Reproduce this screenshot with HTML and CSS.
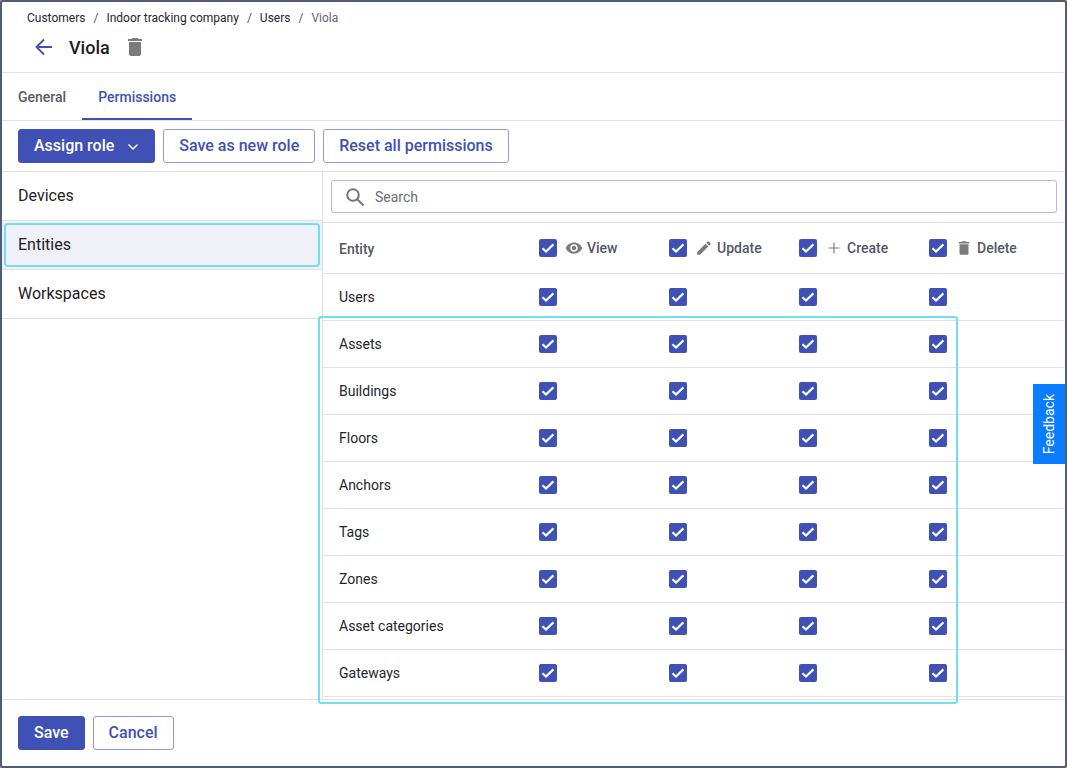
FILE: index.html
```html
<!DOCTYPE html>
<html lang="en">
<head>
  <meta charset="UTF-8" />
  <meta name="viewport" content="width=device-width, initial-scale=1" />
  <title>Viola - Permissions</title>
  <link rel="stylesheet" href="styles.css">
</head>
<body>
  <svg class="defs" width="0" height="0">
    <symbol id="check" viewBox="0 0 18 18">
      <rect width="18" height="18" rx="2" fill="#3f51b5" />
      <path d="M3.500 9.300L7 12.600l7.400-7.200" fill="none" stroke="#fff" stroke-width="2.200" />
    </symbol>
    <symbol id="trash" viewBox="0 0 24 24">
      <path d="M6 19c0 1.100.9 2 2 2h8c1.100 0 2-.9 2-2V7H6v12zM19 4h-3.500l-1-1h-5l-1 1H5v2h14V4z" fill="currentColor" />
    </symbol>
  </svg>

  <div class="frame">
    <header class="page-head">
      <div class="crumbs">
        <span>Customers</span><i>/</i><span>Indoor tracking company</span><i>/</i><span>Users</span><i>/</i><span class="crumb-last">Viola</span>
      </div>
      <div class="title-row">
        <svg class="back" width="24" height="24" viewBox="0 0 24 24"><path d="M21 12H5.500M13 4.500L5.500 12l7.500 7.500" fill="none" stroke="currentColor" stroke-width="1.800" /></svg>
        <h1>Viola</h1>
        <svg class="title-trash" width="24" height="24"><use href="#trash" /></svg>
      </div>
    </header>

    <nav class="tabs">
      <a class="tab">General</a>
      <a class="tab active">Permissions</a>
    </nav>

    <div class="toolbar">
      <button class="btn primary assign">Assign role
        <svg width="12" height="8" viewBox="0 0 12 8"><path d="M1.500 1.500L6 6l4.500-4.500" fill="none" stroke="#fff" stroke-width="1.500" /></svg>
      </button>
      <button class="btn outline">Save as new role</button>
      <button class="btn outline">Reset all permissions</button>
    </div>

    <div class="content">
      <aside class="side">
        <div class="side-item">Devices</div>
        <div class="side-item selected">Entities</div>
        <div class="side-item">Workspaces</div>
      </aside>

      <section class="perms">
        <div class="search-row">
          <label class="search">
            <svg width="24" height="24" viewBox="0 0 24 24"><circle cx="10" cy="10" r="5.800" fill="none" stroke="#757575" stroke-width="2" /><path d="M14.500 14.500L20.500 20.500" stroke="#757575" stroke-width="2" /></svg>
            <span>Search</span>
          </label>
        </div>

        <div class="row head">
          <div class="name">Entity</div>
          <div class="cell"><svg class="cb"><use href="#check" /></svg>
            <svg class="ic" width="18" height="18" viewBox="0 0 24 24"><path d="M12 4.500C7 4.500 2.700 7.600 1 12c1.700 4.400 6 7.500 11 7.500s9.300-3.100 11-7.500c-1.700-4.400-6-7.500-11-7.500zM12 17c-2.800 0-5-2.200-5-5s2.200-5 5-5 5 2.200 5 5-2.200 5-5 5zm0-8c-1.700 0-3 1.300-3 3s1.300 3 3 3 3-1.300 3-3-1.300-3-3-3z" fill="currentColor" /></svg>
            View</div>
          <div class="cell"><svg class="cb"><use href="#check" /></svg>
            <svg class="ic" width="18" height="18" viewBox="0 0 24 24"><path d="M3 17.250V21h3.750L17.800 9.940l-3.750-3.750L3 17.250zM20.700 7.040a1 1 0 0 0 0-1.410l-2.340-2.340a1 1 0 0 0-1.410 0l-1.830 1.830 3.750 3.750 1.830-1.830z" fill="currentColor" /></svg>
            Update</div>
          <div class="cell"><svg class="cb"><use href="#check" /></svg>
            <svg class="ic" width="18" height="18" viewBox="0 0 24 24"><path d="M12 5v14M5 12h14" stroke="currentColor" stroke-width="1.600" fill="none" /></svg>
            Create</div>
          <div class="cell"><svg class="cb"><use href="#check" /></svg>
            <svg class="ic" width="18" height="18"><use href="#trash" /></svg>
            Delete</div>
        </div>

        <div class="row"><div class="name">Users</div><div class="cell"><svg class="cb"><use href="#check" /></svg></div><div class="cell"><svg class="cb"><use href="#check" /></svg></div><div class="cell"><svg class="cb"><use href="#check" /></svg></div><div class="cell"><svg class="cb"><use href="#check" /></svg></div></div>
        <div class="row"><div class="name">Assets</div><div class="cell"><svg class="cb"><use href="#check" /></svg></div><div class="cell"><svg class="cb"><use href="#check" /></svg></div><div class="cell"><svg class="cb"><use href="#check" /></svg></div><div class="cell"><svg class="cb"><use href="#check" /></svg></div></div>
        <div class="row"><div class="name">Buildings</div><div class="cell"><svg class="cb"><use href="#check" /></svg></div><div class="cell"><svg class="cb"><use href="#check" /></svg></div><div class="cell"><svg class="cb"><use href="#check" /></svg></div><div class="cell"><svg class="cb"><use href="#check" /></svg></div></div>
        <div class="row"><div class="name">Floors</div><div class="cell"><svg class="cb"><use href="#check" /></svg></div><div class="cell"><svg class="cb"><use href="#check" /></svg></div><div class="cell"><svg class="cb"><use href="#check" /></svg></div><div class="cell"><svg class="cb"><use href="#check" /></svg></div></div>
        <div class="row"><div class="name">Anchors</div><div class="cell"><svg class="cb"><use href="#check" /></svg></div><div class="cell"><svg class="cb"><use href="#check" /></svg></div><div class="cell"><svg class="cb"><use href="#check" /></svg></div><div class="cell"><svg class="cb"><use href="#check" /></svg></div></div>
        <div class="row"><div class="name">Tags</div><div class="cell"><svg class="cb"><use href="#check" /></svg></div><div class="cell"><svg class="cb"><use href="#check" /></svg></div><div class="cell"><svg class="cb"><use href="#check" /></svg></div><div class="cell"><svg class="cb"><use href="#check" /></svg></div></div>
        <div class="row"><div class="name">Zones</div><div class="cell"><svg class="cb"><use href="#check" /></svg></div><div class="cell"><svg class="cb"><use href="#check" /></svg></div><div class="cell"><svg class="cb"><use href="#check" /></svg></div><div class="cell"><svg class="cb"><use href="#check" /></svg></div></div>
        <div class="row"><div class="name">Asset categories</div><div class="cell"><svg class="cb"><use href="#check" /></svg></div><div class="cell"><svg class="cb"><use href="#check" /></svg></div><div class="cell"><svg class="cb"><use href="#check" /></svg></div><div class="cell"><svg class="cb"><use href="#check" /></svg></div></div>
        <div class="row"><div class="name">Gateways</div><div class="cell"><svg class="cb"><use href="#check" /></svg></div><div class="cell"><svg class="cb"><use href="#check" /></svg></div><div class="cell"><svg class="cb"><use href="#check" /></svg></div><div class="cell"><svg class="cb"><use href="#check" /></svg></div></div>

        <div class="rows-mark"></div>
      </section>
    </div>

    <footer class="foot">
      <button class="btn primary">Save</button>
      <button class="btn outline">Cancel</button>
    </footer>

    <div class="feedback"><span>Feedback</span></div>
  </div>
</body>
</html>
```

FILE: styles.css
```css
*, *::before, *::after {
  box-sizing: border-box;
}

html {
  background: #e9a23b;
}

body {
  margin: 0;
  font-family: Roboto, sans-serif;
  color: #1f2026;
}

.defs {
  position: absolute;
}

.frame {
  position: relative;
  width: 1067px;
  height: 768px;
  border: 2px solid #4f5d78;
  border-radius: 3px;
  display: flex;
  flex-direction: column;
  overflow: hidden;
  background: #fff;
}

/* head */
.page-head {
  height: 71px;
  padding: 9px 0 0 25px;
  border-bottom: 1px solid #e2e2e4;
}

.crumbs {
  display: flex;
  font-size: 12px;
  line-height: 14px;
  color: #24252b;
}

.crumbs i {
  font-style: normal;
  margin: 0 8px;
  color: #55565f;
}

.crumb-last {
  color: #62636c;
}

.title-row {
  display: flex;
  align-items: center;
  margin-top: 8px;
  height: 28px;
  padding-left: 4px;
}

.back {
  color: #3f51b5;
}

.title-row h1 {
  margin: 0 0 0 14px;
  font-size: 18px;
  font-weight: 500;
  color: #1b1c22;
}

.title-trash {
  margin-left: 13px;
  color: #7b7b7f;
}

/* tabs */
.tabs {
  display: flex;
  height: 48px;
  padding-left: 16px;
  border-bottom: 1px solid #e2e2e4;
}

.tab {
  font-size: 14px;
  font-weight: 500;
  line-height: 48px;
  color: #585a66;
}

.tab.active {
  margin-left: 16px;
  padding: 0 16px;
  color: #3f51b5;
  height: 47px;
  border-bottom: 2px solid #3f51b5;
}

/* buttons */
.toolbar {
  display: flex;
  gap: 8px;
  height: 51px;
  padding: 8px 16px 0;
  border-bottom: 1px solid #e2e2e4;
}

.btn {
  height: 34px;
  padding: 0 15px 1px;
  border-radius: 3px;
  font-family: inherit;
  font-size: 16px;
  font-weight: 500;
}

.primary {
  background: #3f51b5;
  border: 1px solid #3f51b5;
  color: #fff;
}

.outline {
  background: #fff;
  border: 1px solid #8f9ae0;
  color: #3f51b5;
}

.assign svg {
  margin-left: 9px;
}

/* main part */
.content {
  flex: 1;
  display: flex;
  min-height: 0;
}

.side {
  flex: none;
  width: 321px;
  border-right: 1px solid #e2e2e4;
}

.side-item {
  height: 49px;
  padding-left: 16px;
  font-size: 16px;
  line-height: 47px;
  border-bottom: 1px solid #e2e2e4;
}

.side-item.selected {
  position: relative;
  background: #f0f1f8;
}

.side-item.selected::after {
  content: '';
  position: absolute;
  left: 2px;
  right: 2px;
  top: 2px;
  bottom: 2px;
  border: 2px solid #6fe0f0;
  border-radius: 4px;
}

.perms {
  position: relative;
  flex: 1;
  min-width: 0;
}

.search-row {
  height: 51px;
  padding: 8px 8px 0;
  border-bottom: 1px solid #e2e2e4;
}

.search {
  display: flex;
  align-items: center;
  gap: 8px;
  height: 33px;
  padding-left: 11px;
  border: 1px solid #bdbdc0;
  border-radius: 3px;
  font-size: 14px;
  color: #6b6c74;
}

.row {
  display: grid;
  grid-template-columns: 200px repeat(4, 130px);
  align-items: center;
  height: 47px;
  padding-left: 16px;
  border-bottom: 1px solid #e2e2e4;
  font-size: 14px;
  color: #24252b;
}

.row.head {
  height: 51px;
  font-weight: 500;
  color: #55576a;
}

.row.head .name {
  padding-top: 2px;
}

.cell {
  display: flex;
  align-items: center;
}

.cb {
  width: 18px;
  height: 18px;
}

.ic {
  margin: 0 4px 0 8px;
  color: #7b7b7f;
}

/* annotation box round the rows */
.rows-mark {
  position: absolute;
  left: -5px;
  top: 144px;
  width: 640px;
  height: 388px;
  border: 2px solid #6fe0f0;
  border-radius: 3px;
  pointer-events: none;
}

.foot {
  display: flex;
  gap: 8px;
  height: 67px;
  padding: 16px 16px 0;
  border-top: 1px solid #e2e2e4;
}

.feedback {
  position: absolute;
  right: 0;
  top: 382px;
  width: 32px;
  height: 80px;
  background: #0a7cff;
  color: #fff;
  font-size: 14px;
  display: flex;
  align-items: center;
  justify-content: center;
}

.feedback span {
  writing-mode: vertical-rl;
  transform: rotate(180deg);
}
```
